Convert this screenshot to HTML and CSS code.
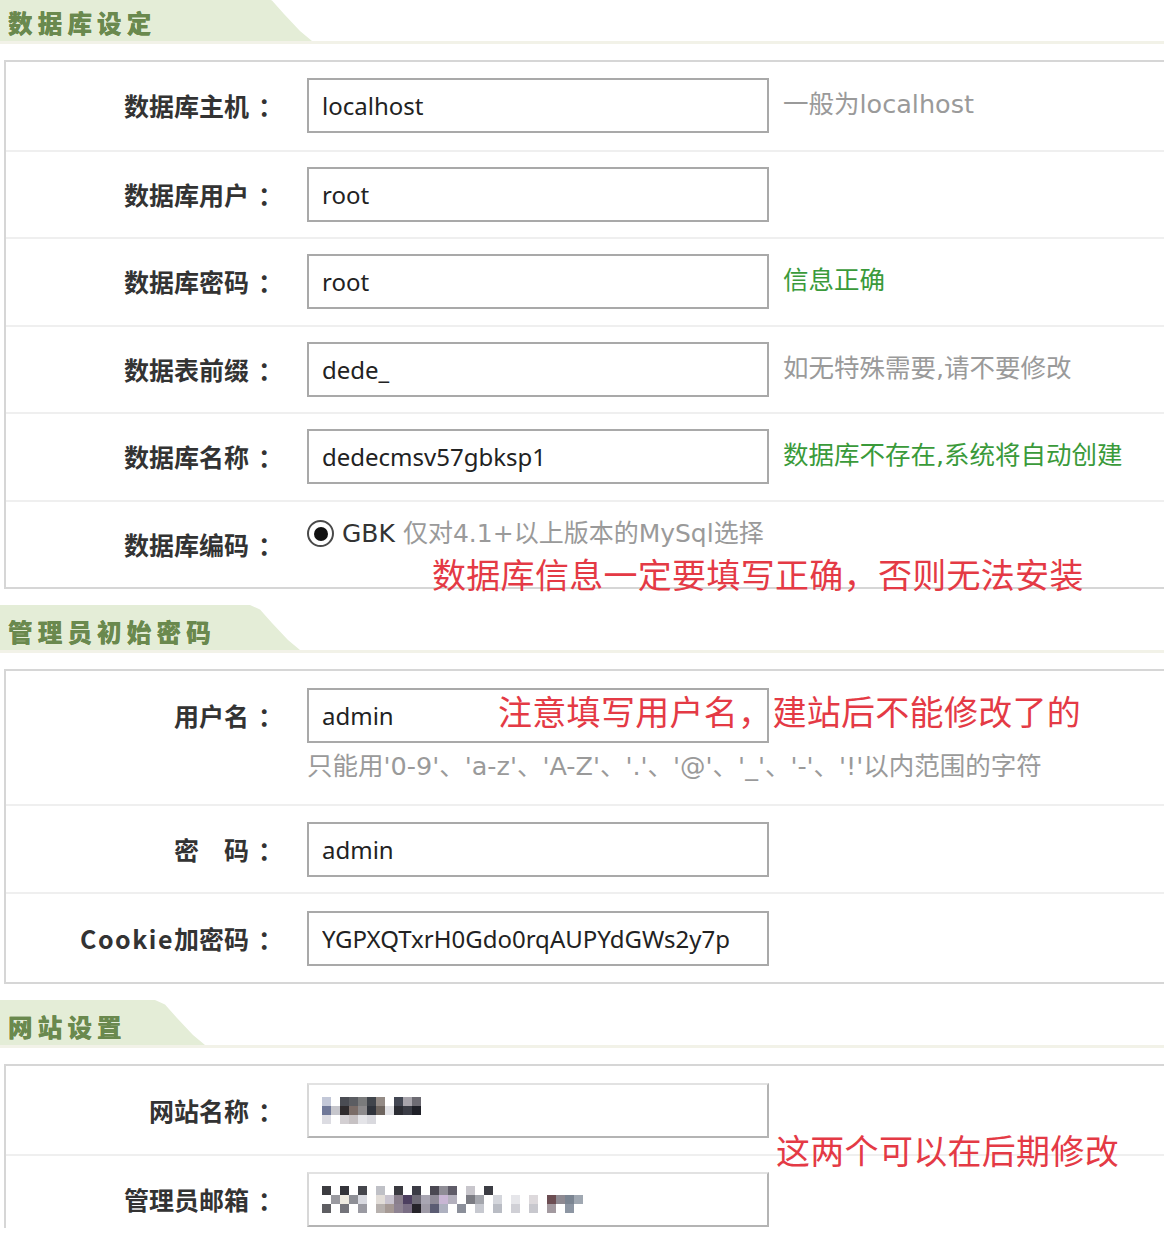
FILE: index.html
```html
<!DOCTYPE html>
<html lang="zh-CN">
<head>
<meta charset="utf-8">
<title>安装设置</title>
<link rel="stylesheet" href="styles.css">
</head>
<body>
<div class="page">

  <div class="sec-head first"><span class="tab tab-db">数据库设定</span></div>
  <div class="panel panel-db">
    <div class="row">
      <div class="label">数据库主机<span class="colon">：</span></div>
      <div class="value"><input class="field" type="text" value="localhost"><span class="hint">一般为localhost</span></div>
    </div>
    <div class="row">
      <div class="label">数据库用户<span class="colon">：</span></div>
      <div class="value"><input class="field" type="text" value="root"></div>
    </div>
    <div class="row">
      <div class="label">数据库密码<span class="colon">：</span></div>
      <div class="value"><input class="field" type="text" value="root"><span class="hint ok">信息正确</span></div>
    </div>
    <div class="row">
      <div class="label">数据表前缀<span class="colon">：</span></div>
      <div class="value"><input class="field" type="text" value="dede_"><span class="hint">如无特殊需要,请不要修改</span></div>
    </div>
    <div class="row">
      <div class="label">数据库名称<span class="colon">：</span></div>
      <div class="value"><input class="field" type="text" value="dedecmsv57gbksp1"><span class="hint ok">数据库不存在,系统将自动创建</span></div>
    </div>
    <div class="row">
      <div class="label">数据库编码<span class="colon">：</span></div>
      <div class="value value-radio"><span class="radio"></span><span class="gbk">GBK</span><span class="radio-note">仅对4.1+以上版本的MySql选择</span></div>
      <div class="mark mark-db">数据库信息一定要填写正确，否则无法安装</div>
    </div>
  </div>

  <div class="sec-head"><span class="tab tab-admin">管理员初始密码</span></div>
  <div class="panel panel-admin">
    <div class="row row-tall">
      <div class="label">用户名<span class="colon">：</span></div>
      <div class="value value-stack">
        <input class="field" type="text" value="admin">
        <div class="note">只能用'0-9'、'a-z'、'A-Z'、'.'、'@'、'_'、'-'、'!'以内范围的字符</div>
      </div>
      <div class="mark mark-user">注意填写用户名，建站后不能修改了的</div>
    </div>
    <div class="row">
      <div class="label">密　码<span class="colon">：</span></div>
      <div class="value"><input class="field" type="text" value="admin"></div>
    </div>
    <div class="row row-cookie">
      <div class="label"><span class="latin">Cookie</span>加密码<span class="colon">：</span></div>
      <div class="value"><input class="field" type="text" value="YGPXQTxrH0Gdo0rqAUPYdGWs2y7p"></div>
    </div>
  </div>

  <div class="sec-head"><span class="tab tab-site">网站设置</span></div>
  <div class="panel panel-site">
    <div class="row">
      <div class="label">网站名称<span class="colon">：</span></div>
      <div class="value">
        <div class="field field-masked">
          <svg class="mosaic" width="108" height="27" viewBox="0 0 108 27">
            <rect x="0" y="0" width="9" height="9" fill="#c3c8d8"/>
            <rect x="18" y="0" width="9" height="9" fill="#4a4c53"/>
            <rect x="27" y="0" width="9" height="9" fill="#5b5d62"/>
            <rect x="36" y="0" width="9" height="9" fill="#7a7b7c"/>
            <rect x="45" y="0" width="9" height="9" fill="#41454c"/>
            <rect x="54" y="0" width="9" height="9" fill="#948b86"/>
            <rect x="72" y="0" width="9" height="9" fill="#434753"/>
            <rect x="81" y="0" width="9" height="9" fill="#a7a4ab"/>
            <rect x="90" y="0" width="9" height="9" fill="#6d6b73"/>
            <rect x="0" y="9" width="9" height="9" fill="#6f7898"/>
            <rect x="9" y="9" width="9" height="9" fill="#c6c6cc"/>
            <rect x="18" y="9" width="9" height="9" fill="#2f2b2d"/>
            <rect x="27" y="9" width="9" height="9" fill="#7a6c67"/>
            <rect x="36" y="9" width="9" height="9" fill="#8d8b8d"/>
            <rect x="45" y="9" width="9" height="9" fill="#30343c"/>
            <rect x="54" y="9" width="9" height="9" fill="#6e655f"/>
            <rect x="63" y="9" width="9" height="9" fill="#e2e2e6"/>
            <rect x="72" y="9" width="9" height="9" fill="#2b2c33"/>
            <rect x="81" y="9" width="9" height="9" fill="#3b3d46"/>
            <rect x="90" y="9" width="9" height="9" fill="#1f2028"/>
            <rect x="0" y="18" width="9" height="9" fill="#dcdce2"/>
            <rect x="18" y="18" width="9" height="9" fill="#d3cfd2"/>
            <rect x="27" y="18" width="9" height="9" fill="#c6c1c3"/>
            <rect x="36" y="18" width="9" height="9" fill="#e4e4e8"/>
            <rect x="45" y="18" width="9" height="9" fill="#d9d9de"/>
          </svg>
        </div>
      </div>
    </div>
    <div class="row">
      <div class="label">管理员邮箱<span class="colon">：</span></div>
      <div class="value">
        <div class="field field-masked">
          <svg class="mosaic" width="266" height="27" viewBox="0 0 266 27">
            <rect x="0" y="0" width="9" height="9" fill="#3c3c40"/>
            <rect x="18" y="0" width="9" height="9" fill="#34343a"/>
            <rect x="36" y="0" width="9" height="9" fill="#45464c"/>
            <rect x="54" y="0" width="9" height="9" fill="#bfc0c6"/>
            <rect x="72" y="0" width="9" height="9" fill="#3a3a40"/>
            <rect x="90" y="0" width="9" height="9" fill="#3b3b45"/>
            <rect x="108" y="0" width="9" height="9" fill="#4a4852"/>
            <rect x="117" y="0" width="9" height="9" fill="#8f8d96"/>
            <rect x="126" y="0" width="9" height="9" fill="#5f5c68"/>
            <rect x="144" y="0" width="9" height="9" fill="#c8c6cc"/>
            <rect x="162" y="0" width="9" height="9" fill="#3c3d44"/>
            <rect x="9" y="9" width="9" height="9" fill="#9a9aa0"/>
            <rect x="18" y="9" width="9" height="9" fill="#eeeae0"/>
            <rect x="27" y="9" width="9" height="9" fill="#8e8f96"/>
            <rect x="36" y="9" width="9" height="9" fill="#d8d9e0"/>
            <rect x="54" y="9" width="9" height="9" fill="#e2ddd8"/>
            <rect x="63" y="9" width="9" height="9" fill="#c9c4cf"/>
            <rect x="72" y="9" width="9" height="9" fill="#8a7f8c"/>
            <rect x="81" y="9" width="9" height="9" fill="#4d3f60"/>
            <rect x="90" y="9" width="9" height="9" fill="#6e6a76"/>
            <rect x="99" y="9" width="9" height="9" fill="#a9a6b3"/>
            <rect x="108" y="9" width="9" height="9" fill="#8f8b98"/>
            <rect x="117" y="9" width="9" height="9" fill="#c8b6d4"/>
            <rect x="126" y="9" width="9" height="9" fill="#b3b0bd"/>
            <rect x="144" y="9" width="9" height="9" fill="#7b7c83"/>
            <rect x="153" y="9" width="9" height="9" fill="#a4a6ad"/>
            <rect x="171" y="9" width="9" height="9" fill="#d4d6dc"/>
            <rect x="189" y="9" width="9" height="9" fill="#e6e6ea"/>
            <rect x="207" y="9" width="9" height="9" fill="#ddd9dc"/>
            <rect x="225" y="9" width="9" height="9" fill="#6c4d52"/>
            <rect x="234" y="9" width="9" height="9" fill="#8e8a92"/>
            <rect x="243" y="9" width="9" height="9" fill="#7b8592"/>
            <rect x="252" y="9" width="9" height="9" fill="#a0a8b2"/>
            <rect x="0" y="18" width="9" height="9" fill="#5e5e62"/>
            <rect x="18" y="18" width="9" height="9" fill="#74747a"/>
            <rect x="36" y="18" width="9" height="9" fill="#9a9aa2"/>
            <rect x="54" y="18" width="9" height="9" fill="#b7b1ae"/>
            <rect x="63" y="18" width="9" height="9" fill="#a69a95"/>
            <rect x="72" y="18" width="9" height="9" fill="#8e8392"/>
            <rect x="81" y="18" width="9" height="9" fill="#7a6e84"/>
            <rect x="90" y="18" width="9" height="9" fill="#26232a"/>
            <rect x="99" y="18" width="9" height="9" fill="#9e9aa6"/>
            <rect x="108" y="18" width="9" height="9" fill="#5b5c73"/>
            <rect x="117" y="18" width="9" height="9" fill="#aeb1c0"/>
            <rect x="135" y="18" width="9" height="9" fill="#8b8f9a"/>
            <rect x="153" y="18" width="9" height="9" fill="#c7c9d0"/>
            <rect x="171" y="18" width="9" height="9" fill="#b9bcc4"/>
            <rect x="189" y="18" width="9" height="9" fill="#d0d0d6"/>
            <rect x="207" y="18" width="9" height="9" fill="#c8c8ce"/>
            <rect x="225" y="18" width="9" height="9" fill="#a39aa0"/>
            <rect x="243" y="18" width="9" height="9" fill="#8d96a3"/>
          </svg>
        </div>
      </div>
    </div>
    <div class="mark mark-site">这两个可以在后期修改</div>
  </div>

</div>
</body>
</html>
```

FILE: styles.css
```css
* {
  box-sizing: border-box;
}

html,
body {
  margin: 0;
  padding: 0;
  background: #ffffff;
}

body {
  overflow: hidden;
  font-family: "Noto Sans", "Noto Sans CJK SC", sans-serif;
  color: #333333;
}

.page {
  height: 1228px;
  overflow: hidden;
}

/* ---------- section headers ---------- */
.sec-head {
  margin-top: 16px;
  height: 48px;
  border-bottom: 3px solid #f2f2e8;
}

.sec-head.first {
  margin-top: -4px;
}

.tab {
  display: block;
  height: 45px;
  padding: 12px 0 0 8px;
  line-height: 29px;
  background: #e4edd7;
  color: #6a894e;
  font-family: "Noto Sans CJK SC", sans-serif;
  font-size: 24.5px;
  font-weight: 900;
  letter-spacing: 5.2px;
  text-shadow: 0 0 0.6px #6a894e;
  clip-path: polygon(0 0, calc(100% - 50px) 0, calc(100% - 40px) 10%, calc(100% - 28px) 40%, calc(100% - 12px) 78%, 100% 100%, 0 100%);
}

.tab-db {
  width: 312px;
}

.tab-admin {
  width: 300px;
}

.tab-site {
  width: 205px;
}

/* ---------- panels ---------- */
.panel {
  position: relative;
  margin: 16px -30px 0 4px;
  border: 2px solid #d6d6d6;
  background: #ffffff;
}

.row {
  position: relative;
  display: flex;
  align-items: center;
  height: 87.5px;
}

.row + .row {
  border-top: 2px solid #efefef;
}

.panel-admin .row,
.panel-site .row {
  height: 88px;
}

.panel-admin .row-tall {
  height: 133px;
  align-items: flex-start;
  padding-top: 17px;
}

.panel-admin .row-cookie {
  height: 90px;
}

.label {
  flex: none;
  width: 301px;
  padding-right: 24px;
  text-align: right;
  font-family: "Noto Sans CJK SC", sans-serif;
  font-size: 25px;
  font-weight: 700;
  line-height: 55px;
  color: #333333;
  white-space: nowrap;
}

.colon {
  display: inline-block;
  margin-left: 9px;
}

.latin {
  letter-spacing: 1.5px;
}

.value {
  display: flex;
  align-items: center;
}

.value-stack {
  flex-direction: column;
  align-items: flex-start;
}

.field {
  width: 462px;
  height: 55px;
  margin: 0;
  border: 2px solid #a9a9a9;
  padding: 0 13px;
  background: #ffffff;
  font-family: "Noto Sans", sans-serif;
  font-size: 24px;
  color: #222222;
  outline: none;
}

.field-masked {
  display: flex;
  align-items: center;
  padding-left: 13px;
  border-color: #b4b4b4;
  border-top-color: #e2e2e2;
  border-left-color: #d8d8d8;
}

.mosaic {
  display: block;
}

.hint {
  margin-left: 14px;
  margin-bottom: 8px;
  font-family: "DejaVu Sans", "Noto Sans CJK SC", sans-serif;
  font-size: 25.5px;
  color: #9a9a9a;
  white-space: nowrap;
}

.hint.ok {
  color: #3a9a3a;
}

.note {
  margin-top: 8px;
  line-height: 30px;
  font-family: "DejaVu Sans", "Noto Sans CJK SC", sans-serif;
  font-size: 25.5px;
  color: #9a9a9a;
  white-space: nowrap;
}

/* ---------- radio ---------- */
.value-radio {
  margin-bottom: 21px;
  line-height: 28px;
  height: 28px;
  font-family: "DejaVu Sans", "Noto Sans CJK SC", sans-serif;
  font-size: 25px;
  white-space: nowrap;
}

.radio {
  display: flex;
  align-items: center;
  justify-content: center;
  width: 27px;
  height: 27px;
  border: 2px solid #4a4a4a;
  border-radius: 50%;
  background: #ffffff;
}

.radio::after {
  content: "";
  width: 14px;
  height: 14px;
  border-radius: 50%;
  background: #111111;
}

.gbk {
  margin-left: 8px;
  color: #333333;
}

.radio-note {
  margin-left: 8px;
  color: #9a9a9a;
}

/* ---------- red annotations ---------- */
.mark {
  position: absolute;
  font-family: "Noto Sans CJK SC", sans-serif;
  font-size: 34px;
  line-height: 34px;
  font-weight: 400;
  letter-spacing: 0.3px;
  color: #e43a45;
  white-space: nowrap;
}

.mark-db {
  left: 426px;
  top: 55px;
}

.mark-user {
  left: 492px;
  top: 23px;
}

.mark-site {
  left: 770px;
  top: 67px;
}
```
